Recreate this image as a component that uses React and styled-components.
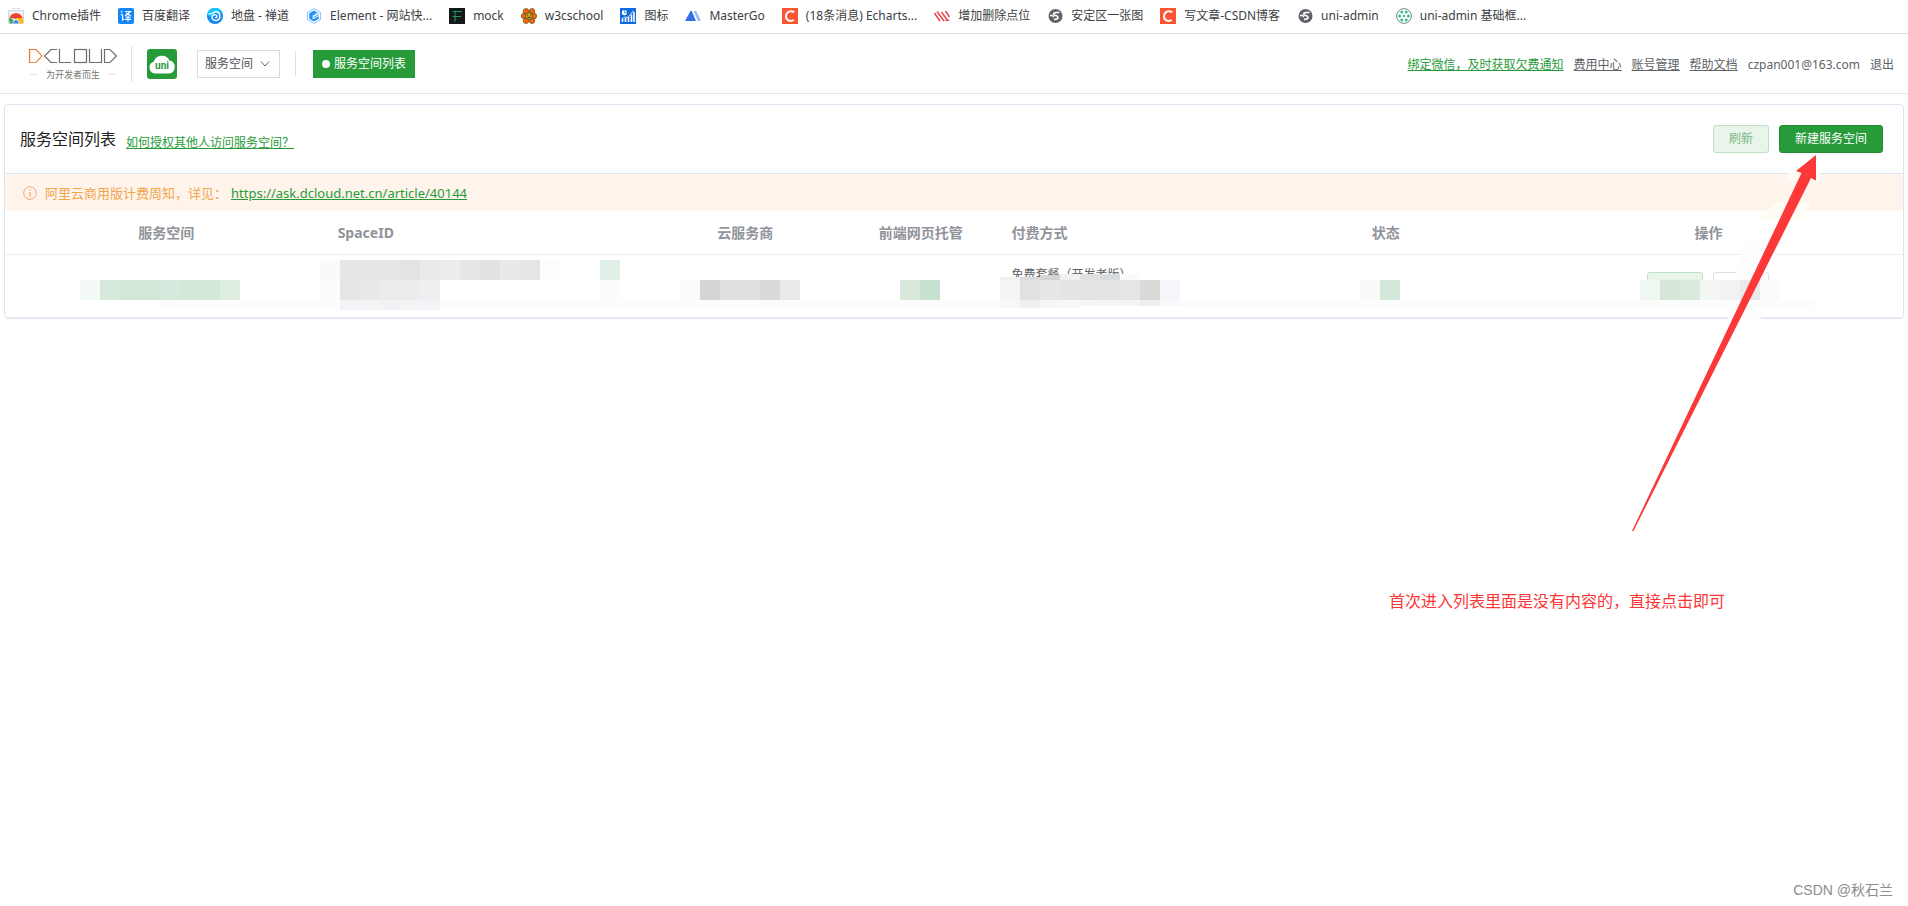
import React from "react";
import styled, { createGlobalStyle } from "styled-components";

const GlobalStyle = createGlobalStyle`
  *, *::before, *::after { box-sizing: border-box; }
  body {
    margin: 0;
    background: #fff;
    color: #606266;
    font-family: "Noto Sans", "Noto Sans CJK SC", sans-serif;
    font-size: 12px;
    line-height: 16px;
  }
  button, select { font: inherit; }
`;

const Page = styled.div`
  position: relative;
  min-height: 100vh;
  overflow-x: hidden;
`;

/* Bookmarks */

const BookmarkBar = styled.nav`
  display: flex;
  align-items: center;
  gap: 17px;
  height: 34px;
  padding: 0 8px 2px;
  border-bottom: 1px solid #dadce0;
  overflow: hidden;
`;

const Bookmark = styled.a`
  display: flex;
  flex: none;
  align-items: center;
  gap: 8px;
  color: #3c4043;
  text-decoration: none;
  white-space: nowrap;

  svg { flex: none; }
`;

const Fav = ({ children }) => (
  <svg width="16" height="16" viewBox="0 0 16 16" aria-hidden="true">{children}</svg>
);

const ChromeStoreIcon = () => (
  <Fav>
    <path d="M0.5 2.5h15v13h-15z" fill="#f1f1f1" stroke="#d5d7da" />
    <path d="M4.5 3V0.5h7V3" fill="none" stroke="#dfe1e3" />
    <path d="M1.6 9.4A7 7 0 0 1 14.6 9.8L14 11H8z" fill="#ea4335" />
    <path d="M1.6 9.2A7 7 0 0 0 2 15.5H6l1-2.5z" fill="#34a853" />
    <path d="M8 10h6.6a7 7 0 0 1 0 5.5H9z" fill="#fbbc05" />
    <path d="M4.6 15.5a3.5 3.5 0 1 1 6.8 0z" fill="#fff" />
    <path d="M5.4 15.5a2.7 2.7 0 1 1 5.2 0z" fill="#4285f4" />
  </Fav>
);

const TranslateIcon = () => (
  <Fav>
    <rect width="16" height="16" rx="2" fill="#1485f8" />
    <path d="M3 3.2l1.4 1.4M2.6 6.8h2v5.4l1.6-1.3M7 3.5h5.6L7 8M8 4.6l5 3.4M10 7.4v6.2M7.6 9.2h5M7 11.4h6.4" fill="none" stroke="#fff" strokeWidth="1.1" />
  </Fav>
);

const ZentaoIcon = () => (
  <Fav>
    <circle cx="8" cy="8" r="8" fill="#1687f0" />
    <path d="M0.1 7A8 8 0 0 1 15.5 5.2C11 3.4 5 5 4.4 9.5z" fill="#0cc8fb" />
    <path d="M1.6 5.6C4.6 7.2 6 3.4 9.4 3.8c4 .6 4.600 6 1.600 8-2.800 1.600-6.400.2-6-2.800.4-2.400 3.600-3.200 4.800-1.200.6 1.400-.8 2.400-1.800 1.600" fill="none" stroke="#fff" strokeWidth="1.4" />
  </Fav>
);

const ElementIcon = () => (
  <Fav>
    <path d="M8 0.6l6.4 3.7v7.4L8 15.4 1.6 11.7V4.3z" fill="#fff" stroke="#7cc0ff" />
    <path d="M8 2.6l4.7 2.7v5.4L8 13.4l-4.7-2.7V5.3z" fill="#2391f5" />
    <path d="M12.7 5.8L7 9v1.8l5.7-3.2M12 4.9L6.6 8" fill="none" stroke="#fff" strokeWidth="1" />
  </Fav>
);

const MockIcon = () => (
  <Fav>
    <rect width="16" height="16" fill="#14181b" />
    <path d="M3.5 3.5h9.5M6 3.5v10M3.5 8.5h8.5" fill="none" stroke="#1d9c57" strokeWidth="1.1" />
  </Fav>
);

const FlowerIcon = () => (
  <Fav>
    <g fill="#f06a0a" stroke="#6b4a1c" strokeWidth=".7">
      <circle cx="5" cy="3.2" r="2.7" />
      <circle cx="11" cy="3.2" r="2.7" />
      <circle cx="13" cy="8" r="2.7" />
      <circle cx="11" cy="12.8" r="2.7" />
      <circle cx="5" cy="12.8" r="2.7" />
      <circle cx="3" cy="8" r="2.7" />
    </g>
    <circle cx="8" cy="8" r="3.6" fill="#c9a22b" stroke="#5a4a18" strokeWidth=".8" />
    <path d="M6 7h1M9 7h1M6.4 9.4h3.2" stroke="#3e3512" />
  </Fav>
);

const ChartIcon = () => (
  <Fav>
    <rect width="16" height="16" fill="#0f6bdc" />
    <circle cx="4.4" cy="4.6" r="2.6" fill="#fff" />
    <path d="M4.4 4.6V2M4.4 4.6H7" stroke="#0f6bdc" strokeWidth=".7" />
    <path d="M2.5 14v-3M5.500 14v-4M8.500 14V9M11.500 14V6.500M14 14V4" stroke="#fff" strokeWidth="1.6" />
    <path d="M1.5 11l3.5-2 3 .5L13.500 2.500" fill="none" stroke="#fff" strokeWidth=".8" />
  </Fav>
);

const MasterGoIcon = () => (
  <Fav>
    <path d="M0 13L5.2 3.4a1 1 0 0 1 1.8 0L11 13z" fill="#3570e6" />
    <path d="M8.500 3h2.100a1 1 0 0 1 .9.6L16 13h-3z" fill="#9dbcf5" />
  </Fav>
);

const CsdnIcon = () => (
  <Fav>
    <rect width="16" height="16" fill="#fc5531" />
    <path d="M12.3 4.2C9 2.2 4.4 3.6 4 8c-.3 4.2 4 6 7.8 4.2" fill="none" stroke="#fff" strokeWidth="1.9" />
  </Fav>
);

const StripesIcon = () => (
  <Fav>
    <path d="M1 6l5 7M3 3.5l7 9.5M7.5 4l6.5 9M11.5 3l4 6" fill="none" stroke="#e5484f" strokeWidth="1.5" />
    <path d="M0 5.5h2M11 12.5l4.5-.5" stroke="#e5484f" />
  </Fav>
);

const GlobeIcon = () => (
  <Fav>
    <circle cx="8.5" cy="8" r="7" fill="#5f6368" />
    <path d="M12.500 4.500H9.500C7 4.500 6.500 5.500 7 6.600c.6 1.200 4 .8 4 2.800 0 1.400-1.500 1.900-4 2.100" fill="none" stroke="#fff" strokeWidth="1.7" />
    <path d="M3 7.500h2.500l1.500 1.500" fill="none" stroke="#fff" strokeWidth="1.4" />
  </Fav>
);

const DotsIcon = () => (
  <Fav>
    <circle cx="8" cy="8" r="7.4" fill="#fff" stroke="#5d7c86" strokeWidth=".9" />
    <g fill="#3fbb86">
      <circle cx="8" cy="8" r="1.3" />
      <circle cx="5.8" cy="4" r="1.5" />
      <circle cx="10.2" cy="4" r="1.5" />
      <circle cx="12.4" cy="8" r="1.5" />
      <circle cx="10.2" cy="12" r="1.5" />
      <circle cx="5.8" cy="12" r="1.5" />
      <circle cx="3.6" cy="8" r="1.5" />
    </g>
  </Fav>
);

const BOOKMARKS = [
  ["Chrome插件", ChromeStoreIcon],
  ["百度翻译", TranslateIcon],
  ["地盘 - 禅道", ZentaoIcon],
  ["Element - 网站快...", ElementIcon],
  ["mock", MockIcon],
  ["w3cschool", FlowerIcon],
  ["图标", ChartIcon],
  ["MasterGo", MasterGoIcon],
  ["(18条消息) Echarts...", CsdnIcon],
  ["增加删除点位", StripesIcon],
  ["安定区一张图", GlobeIcon],
  ["写文章-CSDN博客", CsdnIcon],
  ["uni-admin", GlobeIcon],
  ["uni-admin 基础框...", DotsIcon],
];

/* Header */

const Header = styled.header`
  display: flex;
  align-items: center;
  justify-content: space-between;
  height: 60px;
  padding: 0 14px 0 28px;
  border-bottom: 1px solid #e6e6e6;
`;

const HeaderLeft = styled.div`
  display: flex;
  align-items: center;
`;

const Logo = styled.a`
  display: flex;
  flex-direction: column;
  gap: 6px;
  width: 90px;
  color: #777;
  text-decoration: none;
`;

const Tagline = styled.span`
  display: flex;
  align-items: center;
  justify-content: center;
  gap: 8px;
  font-size: 9px;
  line-height: 10px;
  white-space: nowrap;

  &::before, &::after {
    content: "";
    width: 8px;
    height: 1px;
    background: #e4e4e4;
  }
`;

const Divider = styled.span`
  width: 1px;
  height: ${(p) => p.$height}px;
  margin: 0 ${(p) => p.$after}px 0 ${(p) => p.$before}px;
  background: #dcdfe6;
`;

const UniLink = styled.a`
  display: block;
  width: 30px;
  height: 30px;
  margin-right: 20px;
`;

const SelectBox = styled.label`
  position: relative;
  display: block;

  svg {
    position: absolute;
    top: 9px;
    right: 10px;
    pointer-events: none;
  }
`;

const Select = styled.select`
  width: 83px;
  height: 28px;
  padding: 1px 7px 0;
  border: 1px solid #d5dbe6;
  border-radius: 0;
  background: #fff;
  color: #505358;
  appearance: none;
`;

const CurrentTab = styled.a`
  display: flex;
  align-items: center;
  gap: 4px;
  height: 28px;
  padding: 0 9px;
  background: #279b39;
  color: #fff;
  text-decoration: none;

  &::before {
    content: "";
    width: 8px;
    height: 8px;
    border-radius: 50%;
    background: #fff;
  }
`;

const UserNav = styled.nav`
  display: flex;
  gap: 10px;
  padding-top: 2px;
  color: #606266;
  white-space: nowrap;
`;

const TextLink = styled.a`
  color: ${(p) => (p.$green ? "#279b39" : "#606266")};
  font-size: ${(p) => p.$size || 12}px;
  text-decoration: ${(p) => (p.$plain ? "none" : "underline")};
`;

/* Card */

const Card = styled.main`
  margin: 10px 4px;
  border: 1px solid #dce4ef;
  border-radius: 4px;
  background: #fff;
`;

const CardHeader = styled.div`
  display: flex;
  align-items: center;
  justify-content: space-between;
  height: 69px;
  padding: 0 20px 0 15px;
  border-bottom: 1px solid #dce4ef;
`;

const TitleGroup = styled.div`
  display: flex;
  align-items: flex-end;
  gap: 10px;
`;

const Title = styled.h1`
  margin: 0;
  color: #222;
  font-size: 16px;
  font-weight: 400;
  line-height: 24px;
`;

const Actions = styled.div`
  display: flex;
  gap: 10px;
  ${(p) => p.$center && "justify-content: center;"}
`;

const BUTTON_KINDS = {
  primary: { bg: "#279b39", border: "#238c34", color: "#fff" },
  soft: { bg: "#e9f5eb", border: "#bee1c4", color: "#7db888" },
  plain: { bg: "#fff", border: "#dcdfe6", color: "#606266" },
};

const Button = styled.button`
  min-width: 56px;
  height: 28px;
  padding: 0 15px;
  border: 1px solid ${(p) => BUTTON_KINDS[p.$kind].border};
  border-radius: 3px;
  background: ${(p) => BUTTON_KINDS[p.$kind].bg};
  color: ${(p) => BUTTON_KINDS[p.$kind].color};
`;

const Notice = styled.div`
  display: flex;
  align-items: center;
  height: 37px;
  padding: 0 18px;
  border-radius: 4px;
  background: #fef4eb;
  color: #f3a54e;
  font-size: 13px;

  svg { margin-right: 8px; }
  a { margin-left: 4px; }
`;

const Table = styled.table`
  width: 100%;
  table-layout: fixed;
  border-collapse: separate;
  border-spacing: 0;
`;

const Th = styled.th`
  height: 44px;
  padding: 0 10px;
  border-bottom: 1px solid #ebeef5;
  color: #909399;
  font-size: 14px;
  font-weight: 700;
  line-height: 20px;
  text-align: ${(p) => p.$align};
`;

const Td = styled.td`
  position: relative;
  height: 63px;
  padding: 0 10px;
  border-bottom: 1px solid #ebeef5;
  text-align: ${(p) => p.$align};
`;

const Plan = styled.div`
  height: 38px;
`;

const MosaicSvg = styled.svg`
  position: absolute;
  top: 0;
  left: ${(p) => p.$left};
  pointer-events: none;
`;

/* Each block is [x, y, colour, height]; blocks are 20 wide. */
const Mosaic = ({ left, width, blocks }) => (
  <MosaicSvg $left={left} width={width} height="62" shapeRendering="crispEdges" aria-hidden="true">
    {blocks.map(([x, y, fill, h = 20], i) => (
      <rect key={i} x={x} y={y} width="20" height={h} fill={fill} />
    ))}
  </MosaicSvg>
);

const run = (x, y, colours, h) => colours.map((c, i) => [x + i * 20, y, c, h]);

const COLUMNS = [
  { label: "服务空间", width: "17%", align: "center" },
  { label: "SpaceID", width: "17%", align: "left" },
  { label: "云服务商", width: "10%", align: "center" },
  { label: "前端网页托管", width: "8.5%", align: "center" },
  { label: "付费方式", width: "13.5%", align: "left" },
  { label: "状态", width: "13.5%", align: "center" },
  { label: "操作", width: "20.5%", align: "center" },
];

const MOSAICS = [
  {
    left: "75px",
    width: 240,
    blocks: [
      ...run(0, 25, ["#f4faf6", "#d6e9db", "#d3e8d9", "#d1e7d7", "#d5e9dc", "#d2e8d8", "#d4e8da", "#dfeee1"]),
      ...run(80, 45, Array(8).fill("#fcfcfc"), 8),
    ],
  },
  {
    left: "-8px",
    width: 331,
    blocks: [
      ...run(0, 45, Array(17).fill("#fcfcfc"), 10),
      ...run(0, 5, ["#fafafa", "#e7e7e7", "#e6e8e7", "#e6e6e6", "#e1e3e5", "#edebe9", "#ebecee", "#e6e7e9", "#e2e2e2", "#e8eae9", "#e4e5e7", "#fdfdfd"]),
      ...run(0, 25, ["#fcfcfc", "#e6e6e6", "#e9e9e9", "#ebeceb", "#ececec", "#eeeff1"]),
      ...run(20, 45, ["#f2f3f6", "#f3f4f6", "#f1f2f5", "#f1f3f4", "#f2f3f6"], 10),
      [280, 5, "#e2f1e7"],
      [280, 25, "#fafdfb"],
    ],
  },
  {
    left: "0",
    width: 190,
    blocks: [
      ...run(0, 45, Array(10).fill("#fcfcfc"), 10),
      ...run(30, 25, ["#fcfbf9", "#d4d5d7", "#dee0e2", "#e0e0e0", "#dadada", "#e9eaec"]),
    ],
  },
  {
    left: "0",
    width: 162,
    blocks: [...run(0, 45, Array(9).fill("#fcfcfc"), 9), ...run(60, 25, ["#d8e9dc", "#c6e1d0"])],
  },
  {
    left: "-1px",
    width: 257,
    blocks: [
      ...run(0, 45, Array(13).fill("#fcfcfc"), 6),
      ...run(0, 22, ["#f0f0f0", "#dcdcdc"], 3),
      [40, 20, "#d2d3d5", 5],
      ...run(60, 19, ["#f0f0f0", "#e0e0e0", "#d9dadc", "#f9fbfa"], 6),
      ...run(0, 25, ["#f5f5f5", "#e1e1e1", "#e6e6e6", "#e4e4e4", "#e2e3e5", "#e3e5e4", "#e5e5e5", "#dadad8", "#f5f6f9"]),
      ...run(0, 45, ["#f6f7f9", "#f0f0f2", "#f5f6f8", "#f6f7f9"], 8),
      ...run(80, 45, ["#f4f5f7", "#f3f6f5", "#f4f5f7", "#efeff0", "#f8f9fb"], 6),
    ],
  },
  {
    left: "0",
    width: 257,
    blocks: [...run(0, 45, Array(13).fill("#fcfcfc"), 6), ...run(102, 25, ["#f7faf7", "#d4e8d9"])],
  },
  {
    left: "0",
    width: 389,
    blocks: [
      ...run(0, 45, Array(15).fill("#fcfcfc"), 10),
      ...run(126, 25, ["#eef8f1", "#d5e6d9", "#d9eadd", "#f2f7f3", "#f2f2f2", "#e9eaec", "#fbfbfb"]),
    ],
  },
];

const CELLS = [
  null,
  null,
  null,
  null,
  <Plan>免费套餐（开发者版）</Plan>,
  null,
  <Actions $center>
    <Button type="button" $kind="soft" aria-label="详情" />
    <Button type="button" $kind="plain" aria-label="删除" />
  </Actions>,
];

/* Annotation layer */

const ArrowSvg = styled.svg`
  position: absolute;
  top: 150px;
  right: 80px;
  pointer-events: none;
`;

const Note = styled.p`
  position: absolute;
  top: 589px;
  right: 183px;
  margin: 0;
  color: #fc3636;
  font-size: 16px;
  line-height: 24px;
`;

const Watermark = styled.span`
  position: absolute;
  right: 15px;
  bottom: 6px;
  color: #8c8c8c;
  font-family: "Liberation Sans", "Noto Sans CJK SC", sans-serif;
  font-size: 14px;
  line-height: 20px;
`;

export default function App() {
  return (
    <Page>
      <GlobalStyle />
      <BookmarkBar>
        {BOOKMARKS.map(([label, Icon]) => (
          <Bookmark key={label} href="#">
            <Icon />
            {label}
          </Bookmark>
        ))}
      </BookmarkBar>

      <Header>
        <HeaderLeft>
          <Logo href="#" aria-label="DCloud">
            <svg width="90" height="16" viewBox="0 0 90 16" fill="none" stroke="#6e6e6e" strokeWidth="1.2">
              <path d="M1.5 15V1.5H8" stroke="#ee7526" />
              <path d="M1 14.5H8L14 8L8 1.5" stroke="#f08a4b" />
              <path d="M29 1.5H23L16.5 8L23 14.5H29" />
              <path d="M31.5 1V14.5H43" />
              <rect x="46.5" y="1.5" width="12" height="13" />
              <path d="M61.5 1V14.5H73.5V1" />
              <path d="M76.5 14.5V1.5H82L88.5 8L82 14.5Z" />
            </svg>
            <Tagline>为开发者而生</Tagline>
          </Logo>
          <Divider $height={36} $before={13} $after={15} />
          <UniLink href="#" aria-label="uniCloud">
            <svg width="30" height="30" viewBox="0 0 30 30">
              <rect width="30" height="30" rx="3" fill="#279b39" />
              <path d="M8 24.5a6 6 0 0 1-1.300-11.700A8.500 8.500 0 0 1 22.500 11.500A6.600 6.600 0 0 1 22 24.500z" fill="#fff" />
              <text x="15" y="20" textAnchor="middle" fontFamily="Roboto, sans-serif" fontWeight="700" fontSize="10" fill="#279b39">uni</text>
            </svg>
          </UniLink>
          <SelectBox>
            <Select aria-label="服务空间" defaultValue="space">
              <option value="space">服务空间</option>
            </Select>
            <svg width="10" height="10" viewBox="0 0 10 10" fill="none" stroke="#606266">
              <path d="M1 2.5L5 7L9 2.5" />
            </svg>
          </SelectBox>
          <Divider $height={25} $before={15} $after={17} />
          <CurrentTab href="#">服务空间列表</CurrentTab>
        </HeaderLeft>
        <UserNav>
          <TextLink href="#" $green>绑定微信，及时获取欠费通知</TextLink>
          <TextLink href="#">费用中心</TextLink>
          <TextLink href="#">账号管理</TextLink>
          <TextLink href="#">帮助文档</TextLink>
          <span>czpan001@163.com</span>
          <TextLink href="#" $plain>退出</TextLink>
        </UserNav>
      </Header>

      <Card>
        <CardHeader>
          <TitleGroup>
            <Title>服务空间列表</Title>
            <TextLink href="#" $green>如何授权其他人访问服务空间？</TextLink>
          </TitleGroup>
          <Actions>
            <Button type="button" $kind="soft">刷新</Button>
            <Button type="button" $kind="primary">新建服务空间</Button>
          </Actions>
        </CardHeader>

        <Notice>
          <svg width="14" height="14" viewBox="0 0 14 14" fill="none" stroke="#f3a56a" aria-hidden="true">
            <circle cx="7" cy="7" r="6.3" />
            <path d="M7 3.3v1.4M7 6v4.7" strokeWidth="1.2" />
          </svg>
          阿里云商用版计费周知，详见：
          <TextLink href="#" $green $size={13}>https://ask.dcloud.net.cn/article/40144</TextLink>
        </Notice>

        <Table>
          <colgroup>
            {COLUMNS.map((c) => (
              <col key={c.label} width={c.width} />
            ))}
          </colgroup>
          <thead>
            <tr>
              {COLUMNS.map((c) => (
                <Th key={c.label} scope="col" $align={c.align}>{c.label}</Th>
              ))}
            </tr>
          </thead>
          <tbody>
            <tr>
              {COLUMNS.map((c, i) => (
                <Td key={c.label} $align={c.align}>
                  {CELLS[i]}
                  <Mosaic {...MOSAICS[i]} />
                </Td>
              ))}
            </tr>
          </tbody>
        </Table>
      </Card>

      <ArrowSvg width="208" height="390" viewBox="1620 150 208 390" aria-hidden="true">
        <path d="M1791 170h28l3 11h-36z" fill="#fffcf6" />
        <path d="M1776 201h35l-9 19h-42z" fill="#fffcf4" />
        <path d="M1745 240h31v16h-10v24h-30v-8zM1731 312h32l-3 8h-33z" fill="#fdfdfd" />
        <path d="M1816 155L1796 171L1801.5 173L1632 531L1633.5 531L1811 178L1816 180.5Z" fill="#fc3838" />
      </ArrowSvg>
      <Note>首次进入列表里面是没有内容的，直接点击即可</Note>
      <Watermark>CSDN @秋石兰</Watermark>
    </Page>
  );
}
